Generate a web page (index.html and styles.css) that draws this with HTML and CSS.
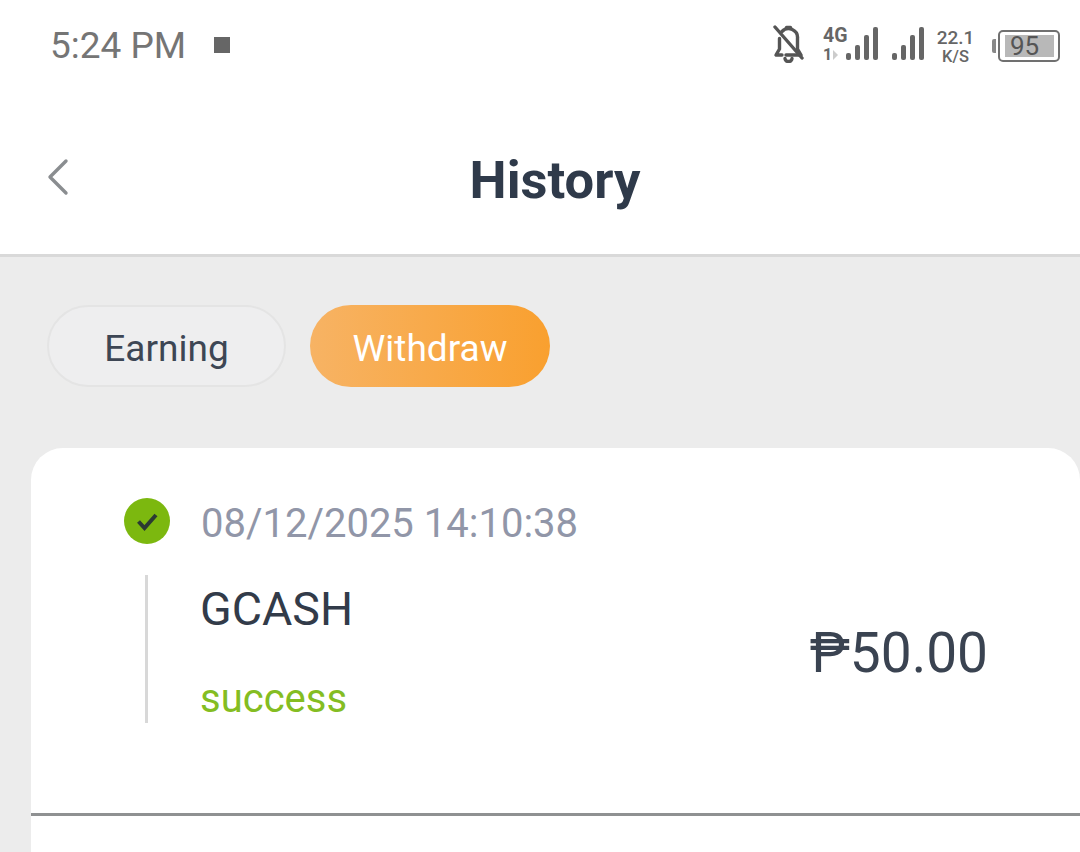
FILE: index.html
```html
<!DOCTYPE html>
<html lang="en">
<head>
<meta charset="utf-8">
<title>History</title>
<link rel="stylesheet" href="styles.css">
</head>
<body>
<div class="screen">
  <div class="status">
    <div class="status-left">
      <span class="time">5:24 PM</span>
      <span class="stop"></span>
    </div>
    <div class="status-right">
      <svg class="bell" width="31" height="38" viewBox="0 0 31 38" fill="none" stroke="#555" stroke-width="3.4" stroke-linecap="round" stroke-linejoin="round">
        <path d="M9 6.500 A9 9 0 0 1 24.500 13.500 V24 L28 30 H13"/>
        <path d="M6.500 13.500 V24 L3 30 H9"/>
        <path d="M12 33.500 a3.500 3 0 0 0 7 0"/>
        <path d="M13.500 2.500 h4"/>
        <path d="M2 2 L29 33"/>
      </svg>
      <div class="net">
        <span class="net-top">4G</span>
        <span class="net-bottom">1<i class="net-arrow"></i></span>
      </div>
      <div class="bars bars-a">
        <i class="b1"></i><i class="b2"></i><i class="b3"></i><i class="b4"></i>
      </div>
      <div class="bars bars-b">
        <i class="b1"></i><i class="b2"></i><i class="b3"></i><i class="b4"></i>
      </div>
      <div class="speed">
        <span class="speed-top">22.1</span>
        <span class="speed-bottom">K/S</span>
      </div>
      <div class="battery">
        <i class="cap"></i>
        <div class="shell"><div class="level">95</div></div>
      </div>
    </div>
  </div>

  <header class="nav">
    <svg class="back" width="24" height="38" viewBox="0 0 24 38" fill="none" stroke="#8a8d90" stroke-width="3.4" stroke-linecap="round" stroke-linejoin="round">
      <path d="M20 3 L4 19 L20 35"/>
    </svg>
    <h1 class="title">History</h1>
  </header>

  <main class="content">
    <div class="tabs">
      <div class="tab">Earning</div>
      <div class="tab tab-active">Withdraw</div>
    </div>

    <section class="card">
      <div class="record">
        <div class="record-main">
          <div class="stamp">
            <svg class="check" width="46" height="46" viewBox="0 0 46 46">
              <circle cx="23" cy="23" r="23" fill="#7cb80f"/>
              <path d="M14.500 23.500 L20.500 30 L32 17" fill="none" stroke="#2b3a33" stroke-width="4"/>
            </svg>
            <span class="date">08/12/2025 14:10:38</span>
          </div>
          <div class="details">
            <div class="method">GCASH</div>
            <div class="state">success</div>
          </div>
        </div>
        <div class="amount">₱50.00</div>
      </div>
    </section>
  </main>
</div>
</body>
</html>
```

FILE: styles.css
```css
* { box-sizing: border-box; }

html, body {
  margin: 0;
  height: 852px;
  overflow: hidden;
  background: #fff;
  font-family: Roboto, "Liberation Sans", sans-serif;
}

.screen {
  width: 1080px;
  height: 852px;
  display: flex;
  flex-direction: column;
}

/* Status bar */
.status {
  height: 92px;
  flex: none;
  display: flex;
  align-items: center;
  justify-content: space-between;
  padding: 0 20px 0 50px;
}

.status-left {
  display: flex;
  align-items: center;
  gap: 28px;
}

.time {
  font-size: 37px;
  line-height: 42px;
  color: #757575;
}

.stop {
  width: 16px;
  height: 16px;
  margin-bottom: 2px;
  background: #666;
}

.status-right {
  display: flex;
  align-items: center;
}

.bell {
  margin-right: 19px;
  margin-bottom: 4px;
}

.net {
  width: 23px;
  display: flex;
  flex-direction: column;
  color: #666;
  font-weight: 700;
  margin-bottom: 3px;
}

.net-top {
  font-size: 19.500px;
  line-height: 20px;
}

.net-bottom {
  font-size: 16px;
  line-height: 17px;
  display: flex;
  align-items: center;
  gap: 1px;
}

.net-arrow {
  width: 0;
  height: 0;
  border-left: 5px solid #ccc;
  border-top: 5px solid transparent;
  border-bottom: 5px solid transparent;
}

.bars {
  display: flex;
  align-items: flex-end;
  gap: 4px;
  height: 33px;
  margin-bottom: 5px;
}

.bars i {
  width: 5px;
  border-radius: 2px;
  background: #666;
}

.bars .b1 { height: 7px; }
.bars .b2 { height: 15px; }
.bars .b3 { height: 25px; }
.bars .b4 { height: 33px; }

.bars-b { margin-left: 14px; }

.speed {
  display: flex;
  flex-direction: column;
  align-items: center;
  width: 35px;
  margin-left: 14px;
  color: #666;
  font-weight: 500;
}

.speed-top {
  font-size: 19px;
  line-height: 20px;
}

.speed-bottom {
  font-size: 16.500px;
  line-height: 17px;
}

.battery {
  display: flex;
  align-items: center;
  margin-left: 19px;
}

.cap {
  width: 4px;
  height: 14px;
  margin-right: 2px;
  background: #888;
  border-radius: 2px 0 0 2px;
}

.shell {
  width: 62px;
  height: 32px;
  padding: 3px 3px 3px 5px;
  border: 2.500px solid #707070;
  border-radius: 5px;
}

.level {
  height: 100%;
  width: 49px;
  background: #b8b8b8;
  color: #555;
  font-size: 26px;
  line-height: 22px;
  padding-left: 5px;
}

/* Navigation bar */
.nav {
  height: 165px;
  flex: none;
  position: relative;
  display: flex;
  align-items: center;
  justify-content: center;
  border-bottom: 3px solid #d9d9d9;
  padding-top: 14px;
}

.back {
  position: absolute;
  left: 46px;
  top: 66px;
}

.title {
  margin: 0 0 0 30px;
  font-size: 52.500px;
  line-height: 60px;
  font-weight: 700;
  color: #2f3a4a;
}

/* Content */
.content {
  flex: 1;
  min-height: 0;
  background: #ececec;
  display: flex;
  flex-direction: column;
  padding: 48px 0 0 31px;
}

.tabs {
  display: flex;
  gap: 24px;
  margin-left: 16px;
  flex: none;
}

.tab {
  width: 239px;
  height: 82px;
  padding-top: 4px;
  border-radius: 41px;
  border: 2px solid #e4e4e4;
  background: #eeeeef;
  color: #3d4654;
  font-size: 37px;
  display: flex;
  align-items: center;
  justify-content: center;
}

.tab-active {
  width: 240px;
  border: none;
  background: linear-gradient(90deg, #f7b364 0%, #f9a02f 100%);
  color: #fff;
}

.card {
  flex: 1;
  margin-top: 61px;
  background: #fff;
  border-radius: 32px 32px 0 0;
}

.record {
  height: 368px;
  display: flex;
  justify-content: space-between;
  align-items: flex-start;
  padding: 50px 92px 0 93px;
  border-bottom: 3px solid #8f9192;
}

.stamp {
  display: flex;
  align-items: center;
  gap: 31px;
  height: 46px;
}

.check { flex: none; }

.date {
  font-size: 40px;
  padding-top: 4px;
  color: #9196a8;
  white-space: nowrap;
}

.details {
  margin: 31px 0 0 21px;
  padding-left: 52px;
  height: 148px;
  border-left: 3px solid #d8d8d8;
}

.method {
  font-size: 46.500px;
  line-height: 68px;
  color: #323b49;
}

.state {
  margin-top: 34px;
  font-size: 40px;
  line-height: 44px;
  color: #84bd22;
}

.amount {
  margin-top: 124px;
  font-size: 55px;
  line-height: 62px;
  color: #3a4351;
}
```
